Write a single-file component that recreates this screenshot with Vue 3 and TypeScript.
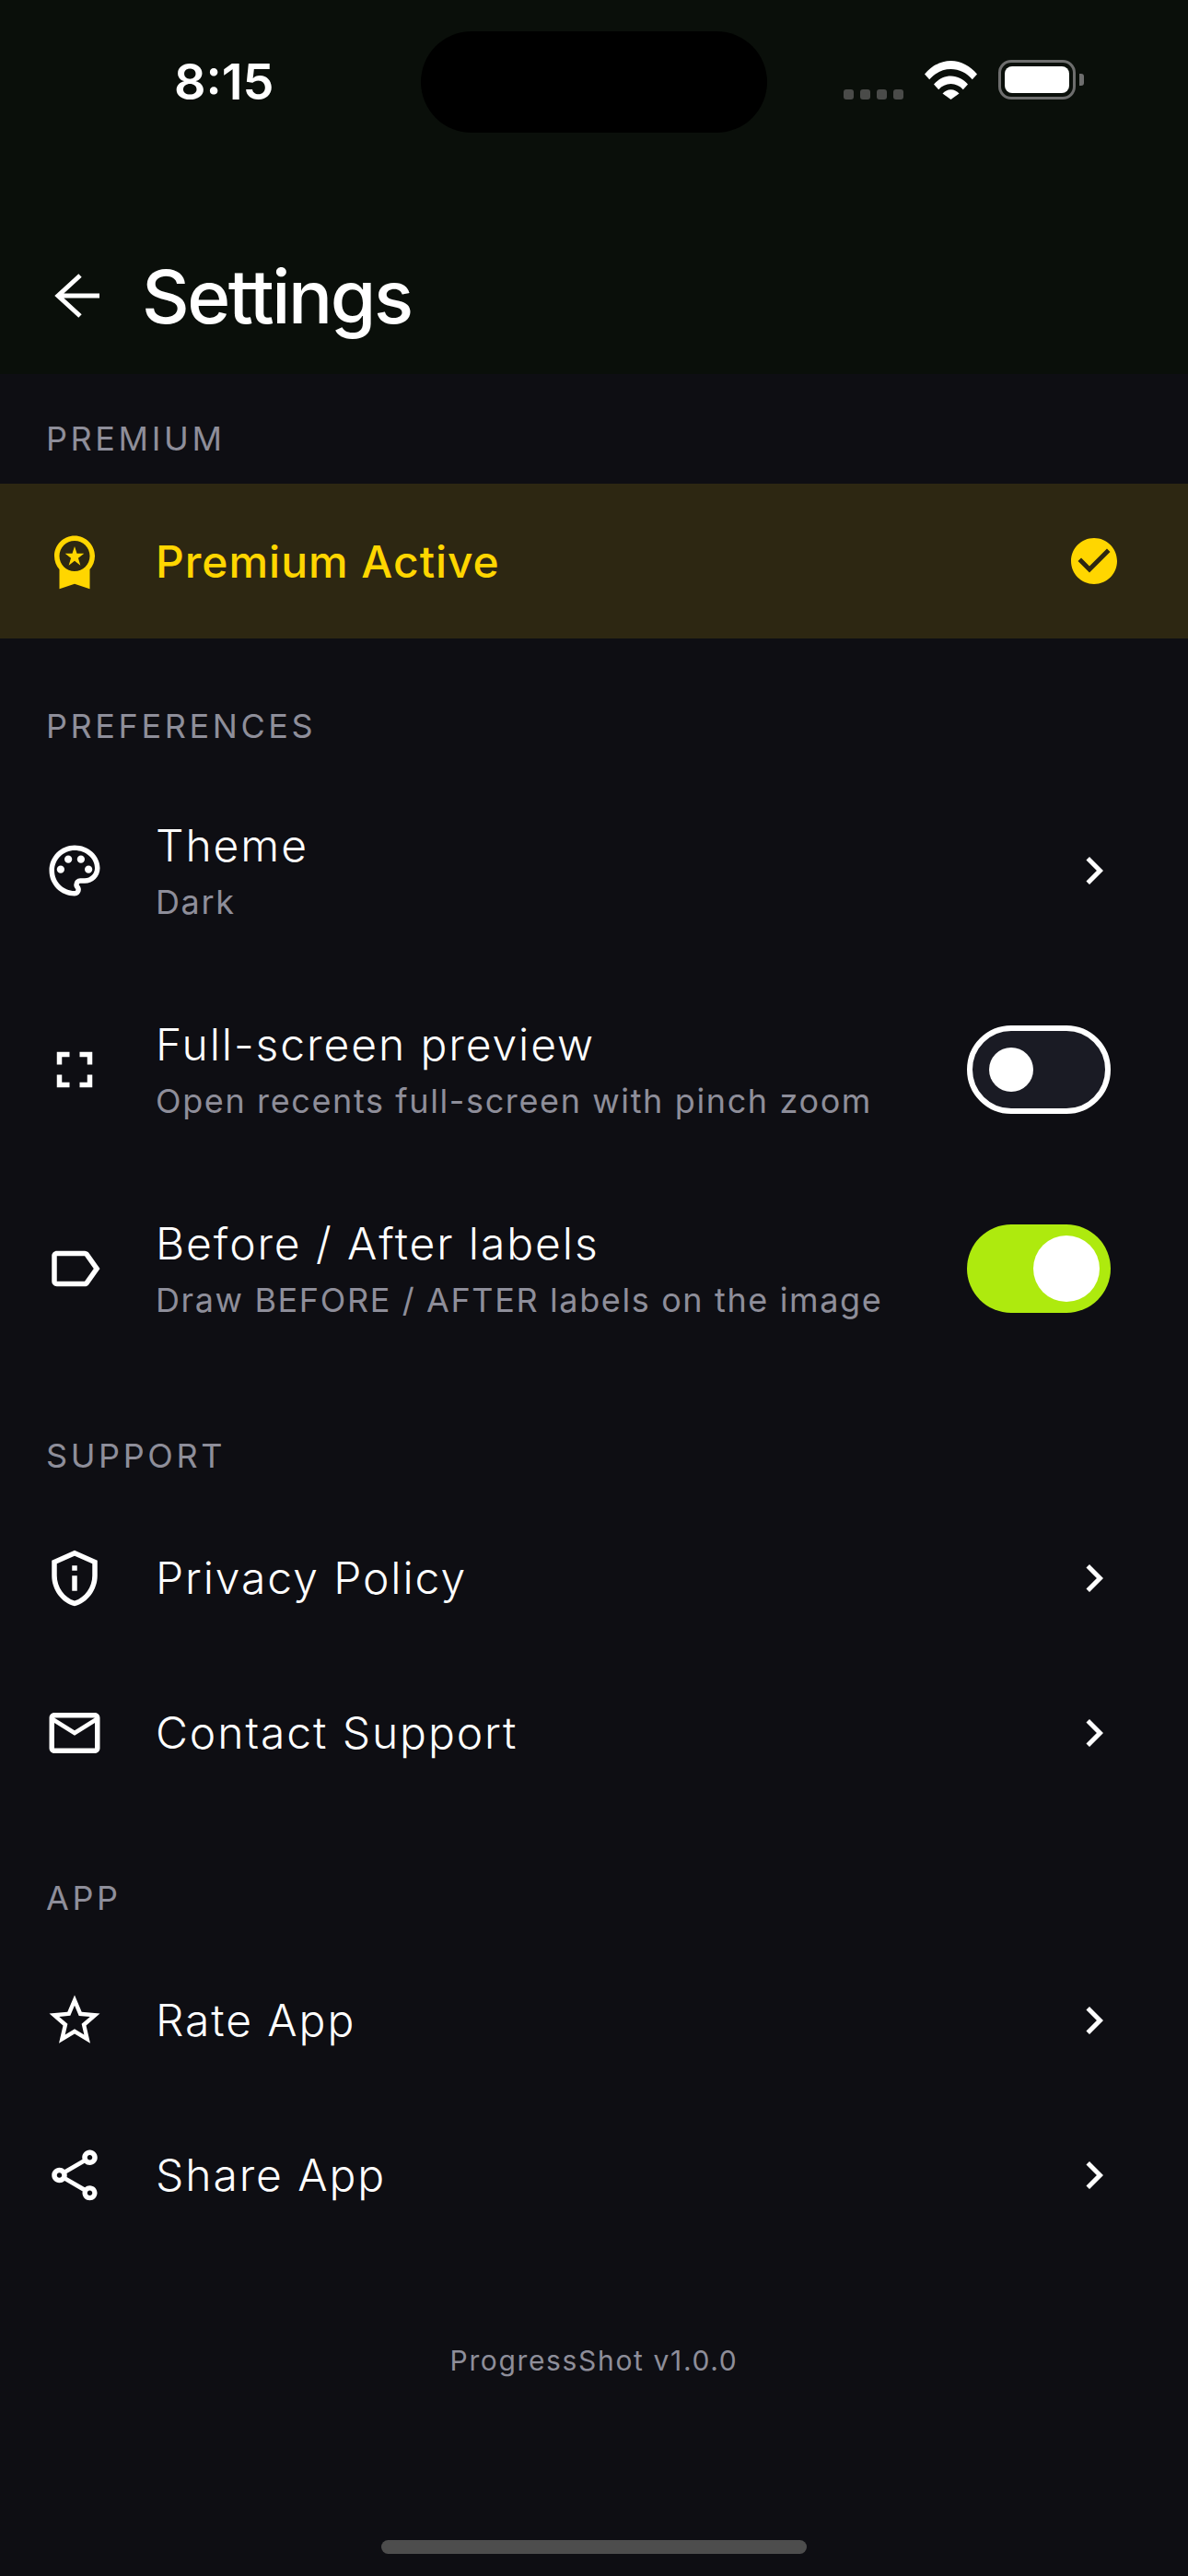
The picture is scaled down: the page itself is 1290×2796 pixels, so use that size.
<script setup lang="ts">
type Row = {
  title: string;
  sub?: string;
  icon: string;
  dots?: boolean;
  toggle?: "on" | "off";
};

const icons = {
  palette:
    "M12 22C6.49 22 2 17.51 2 12S6.49 2 12 2s10 4.04 10 9c0 3.31-2.69 6-6 6h-1.77c-.28 0-.5.22-.5.5 0 .12.05.23.13.33.41.47.64 1.06.64 1.67A2.5 2.5 0 0 1 12 22zm0-18c-4.41 0-8 3.59-8 8s3.59 8 8 8c.28 0 .5-.22.5-.5a.54.54 0 0 0-.14-.35c-.41-.46-.63-1.05-.63-1.65a2.5 2.5 0 0 1 2.5-2.5H16c2.21 0 4-1.79 4-4 0-3.86-3.59-7-8-7z",
  fullscreen: "M7 14H5v5h5v-2H7v-3zm-2-4h2V7h3V5H5v5zm12 7h-3v2h5v-5h-2v3zM14 5v2h3v3h2V5h-5z",
  label:
    "M17.63 5.84C17.27 5.33 16.67 5 16 5L5 5.01C3.9 5.01 3 5.9 3 7v10c0 1.1.9 1.99 2 1.99L16 19c.67 0 1.27-.33 1.63-.84L22 12l-4.37-6.16zM16 17H5V7h11l3.55 5L16 17z",
  privacy:
    "M12 3.19l7 3.11V11c0 4.52-2.98 8.69-7 9.93-4.02-1.24-7-5.41-7-9.93V6.3l7-3.11M12 1L3 5v6c0 5.55 3.84 10.74 9 12 5.16-1.26 9-6.45 9-12V5l-9-4zm-1 6h2v2h-2zm0 4h2v6h-2z",
  mail: "M20 4H4c-1.1 0-1.99.9-1.99 2L2 18c0 1.1.9 2 2 2h16c1.1 0 2-.9 2-2V6c0-1.1-.9-2-2-2zm0 14H4V8l8 5 8-5v10zm-8-7L4 6h16l-8 5z",
  star: "M22 9.24l-7.19-.62L12 2 9.19 8.63 2 9.24l5.46 4.73L5.82 21 12 17.27 18.18 21l-1.63-7.03L22 9.24zM12 15.4l-3.76 2.27 1-4.28-3.32-2.88 4.38-.38L12 6.1l1.71 4.04 4.38.38-3.32 2.88 1 4.28L12 15.4z",
  share:
    "M18 16.08c-.76 0-1.44.3-1.96.77L8.91 12.7c.05-.23.09-.46.09-.7s-.04-.47-.09-.7l7.05-4.11c.54.5 1.25.81 2.04.81 1.66 0 3-1.34 3-3s-1.34-3-3-3-3 1.34-3 3c0 .24.04.47.09.7L8.04 9.81C7.5 9.31 6.79 9 6 9c-1.66 0-3 1.34-3 3s1.34 3 3 3c.79 0 1.5-.31 2.04-.81l7.12 4.16c-.05.21-.08.43-.08.65 0 1.61 1.31 2.92 2.92 2.92s2.92-1.31 2.92-2.92-1.31-2.92-2.92-2.92zM18 4c.55 0 1 .45 1 1s-.45 1-1 1-1-.45-1-1 .45-1 1-1zM6 13c-.55 0-1-.45-1-1s.45-1 1-1 1 .45 1 1-.45 1-1 1zm12 7.02c-.55 0-1-.45-1-1s.45-1 1-1 1 .45 1 1-.45 1-1 1z",
};

const sections: { name: string; rows: Row[] }[] = [
  {
    name: "PREFERENCES",
    rows: [
      { title: "Theme", sub: "Dark", icon: icons.palette, dots: true },
      {
        title: "Full-screen preview",
        sub: "Open recents full-screen with pinch zoom",
        icon: icons.fullscreen,
        toggle: "off",
      },
      {
        title: "Before / After labels",
        sub: "Draw BEFORE / AFTER labels on the image",
        icon: icons.label,
        toggle: "on",
      },
    ],
  },
  {
    name: "SUPPORT",
    rows: [
      { title: "Privacy Policy", icon: icons.privacy },
      { title: "Contact Support", icon: icons.mail },
    ],
  },
  {
    name: "APP",
    rows: [
      { title: "Rate App", icon: icons.star },
      { title: "Share App", icon: icons.share },
    ],
  },
];
</script>

<template>
  <div class="screen">
    <header class="header">
      <div class="status">
        <span class="time">8:15</span>
        <div class="island"></div>
        <div class="status-icons">
          <div class="signal"><i></i><i></i><i></i><i></i></div>
          <svg class="wifi" viewBox="0 0 57 42" width="57" height="42">
            <path fill="#fff" d="M0 14.500C7.500 5.500 17.500 0 28.500 0S49.500 5.500 57 14.500l-5.200 5.800C45.800 13.200 37.500 9 28.500 9S11.200 13.200 5.200 20.300z" />
            <path fill="#fff" d="M10 25.500C14.800 20 21.300 16.500 28.500 16.500S42.200 20 47 25.500l-5.200 5.700C38.300 27.300 33.600 25 28.500 25s-9.800 2.300-13.300 6.200z" />
            <path fill="#fff" d="M19.500 35.500c2.400-2.600 5.500-4.200 9-4.200s6.600 1.600 9 4.200L28.500 42z" />
          </svg>
          <div class="battery"><div class="battery-fill"></div></div>
          <div class="battery-nub"></div>
        </div>
      </div>
      <div class="topbar">
        <svg class="back" viewBox="0 0 72 72">
          <path d="M26 36H72M51 14L27 36L51 58" fill="none" stroke="#fff" stroke-width="5" />
        </svg>
        <h1>Settings</h1>
      </div>
    </header>

    <section class="first">
      <div class="section-label">PREMIUM</div>
      <div class="premium">
        <svg class="icon" viewBox="0 0 24 24">
          <path d="M9.680 13.690 12 11.930l2.310 1.760-.88-2.850L15.750 9h-2.840L12 6.190 11.090 9H8.250l2.310 1.840-.88 2.850zM20 10c0-4.420-3.580-8-8-8s-8 3.580-8 8c0 2.030.76 3.870 2 5.280V23l6-2 6 2v-7.720c1.240-1.410 2-3.250 2-5.280zm-8-6c3.310 0 6 2.690 6 6s-2.690 6-6 6-6-2.690-6-6 2.690-6 6-6z" />
        </svg>
        <span class="premium-text">Premium Active</span>
        <svg class="chevron" viewBox="0 0 24 24">
          <path d="M12 2C6.480 2 2 6.480 2 12s4.480 10 10 10 10-4.480 10-10S17.520 2 12 2zm-2 15l-5-5 1.410-1.410L10 14.170l7.590-7.590L19 8l-9 9z" />
        </svg>
      </div>
    </section>

    <section v-for="section in sections" :key="section.name" class="group">
      <div class="section-label">{{ section.name }}</div>
      <div v-for="row in section.rows" :key="row.title" class="row" :class="{ tall: row.sub }">
        <svg class="icon" viewBox="0 0 24 24">
          <path :d="row.icon" />
          <template v-if="row.dots">
            <circle cx="6.500" cy="11.500" r="1.500" />
            <circle cx="9.500" cy="7.500" r="1.500" />
            <circle cx="14.500" cy="7.500" r="1.500" />
            <circle cx="17.500" cy="11.500" r="1.500" />
          </template>
        </svg>
        <div class="text">
          <div class="title">{{ row.title }}</div>
          <div v-if="row.sub" class="sub">{{ row.sub }}</div>
        </div>
        <div v-if="row.toggle" class="toggle" :class="row.toggle"><div class="knob"></div></div>
        <svg v-else class="chevron" viewBox="0 0 24 24">
          <path d="M10 6L8.590 7.410 13.170 12l-4.580 4.590L10 18l6-6z" />
        </svg>
      </div>
    </section>

    <footer class="version">ProgressShot v1.0.0</footer>
    <div class="home-bar"></div>
  </div>
</template>

<style scoped>
.screen {
  width: 1290px;
  height: 2796px;
  display: flex;
  flex-direction: column;
  background: #0e0e13;
  color: #fff;
  font-family: Inter, "Liberation Sans", sans-serif;
  overflow: hidden;
}

.header {
  height: 406px;
  flex: none;
  background: #0a0f0a;
}

.status {
  display: flex;
  align-items: center;
  height: 110px;
  padding-top: 34px;
}

.time {
  width: 268px;
  margin-left: 189px;
  font-size: 54px;
  font-weight: 600;
  line-height: 1;
}

.island {
  width: 376px;
  height: 110px;
  border-radius: 55px;
  background: #000;
}

.status-icons {
  display: flex;
  align-items: flex-end;
  margin-left: 83px;
  margin-top: -6px;
}

.signal {
  display: flex;
  gap: 7px;
  width: 88px;
}

.signal i {
  width: 11px;
  height: 11px;
  border-radius: 3px;
  background: #4a4b49;
}

.wifi {
  display: block;
}

.battery {
  width: 84px;
  height: 43px;
  margin-left: 23px;
  padding: 4px;
  box-sizing: border-box;
  border: 3px solid #6e6e6e;
  border-radius: 14px;
}

.battery-fill {
  height: 100%;
  background: #fff;
  border-radius: 8px;
}

.battery-nub {
  width: 5px;
  height: 13px;
  margin: 0 0 15px 4px;
  background: #6e6e6e;
  border-radius: 0 3px 3px 0;
}

.topbar {
  display: flex;
  align-items: center;
  height: 120px;
  margin-top: 117px;
  padding-left: 36px;
}

.back {
  width: 72px;
  height: 72px;
}

h1 {
  margin: 0 0 0 46px;
  font-size: 80px;
  font-weight: 500;
  letter-spacing: -2.400px;
}

.section-label {
  height: 44px;
  padding-left: 50px;
  font-size: 36px;
  line-height: 44px;
  letter-spacing: 3.600px;
  color: #8e8e9a;
}

.first {
  padding-top: 48px;
}

.first .section-label {
  margin-bottom: 27px;
}

.group {
  margin-top: 73px;
}

.group .section-label {
  margin-bottom: 27px;
}

.premium,
.row {
  display: flex;
  align-items: center;
  padding: 0 72px 0 48px;
  height: 168px;
}

.premium {
  background: #2d2712;
  color: #ffd600;
}

.row.tall {
  height: 216px;
}

.icon {
  flex: none;
  width: 66px;
  height: 66px;
  fill: currentColor;
}

.premium-text {
  margin-left: 55px;
  font-size: 48px;
  font-weight: 500;
  letter-spacing: 0.960px;
  flex: 1;
}

.text {
  flex: 1;
  margin-left: 55px;
  min-width: 0;
}

.row.tall .text {
  padding-bottom: 2px;
}

.title {
  font-size: 48px;
  font-weight: 300;
  line-height: 62px;
  letter-spacing: 1.920px;
}

.sub {
  margin-top: 8px;
  font-size: 36px;
  line-height: 44px;
  letter-spacing: 1.620px;
  color: #8e8e9a;
}

.chevron {
  flex: none;
  width: 60px;
  height: 60px;
  fill: currentColor;
}

.toggle {
  flex: none;
  display: flex;
  align-items: center;
  box-sizing: border-box;
  width: 156px;
  height: 96px;
  margin-right: 12px;
  border-radius: 48px;
}

.toggle.off {
  padding-left: 18px;
  background: #1a1b24;
  border: 6px solid #fff;
}

.toggle.off .knob {
  width: 48px;
  height: 48px;
  border-radius: 50%;
  background: #fff;
}

.toggle.on {
  justify-content: flex-end;
  padding-right: 12px;
  background: #aeea0e;
}

.toggle.on .knob {
  width: 72px;
  height: 72px;
  border-radius: 50%;
  background: #fff;
}

.version {
  margin-top: 97px;
  text-align: center;
  font-size: 30px;
  line-height: 40px;
  letter-spacing: 1.650px;
  color: #8e8e9a;
}

.home-bar {
  width: 462px;
  height: 15px;
  margin: auto auto 24px;
  border-radius: 8px;
  background: #4d4d4d;
}
</style>
